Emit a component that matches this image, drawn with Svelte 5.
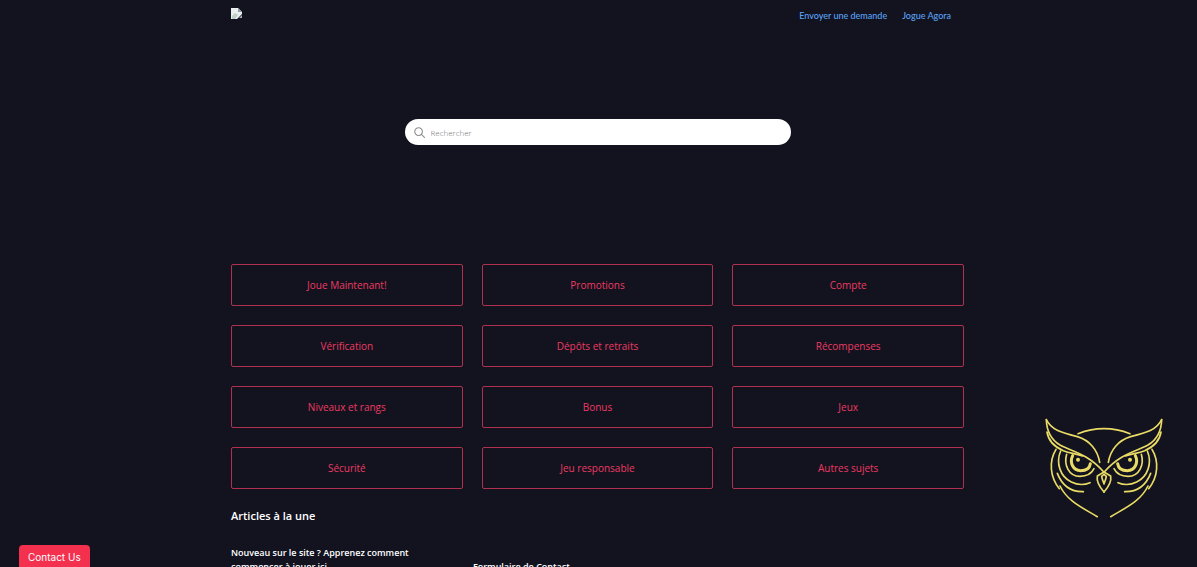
<script lang="ts">
  const links = ["Envoyer une demande", "Jogue Agora"];

  const categories = [
    "Joue Maintenant!",
    "Promotions",
    "Compte",
    "Vérification",
    "Dépôts et retraits",
    "Récompenses",
    "Niveaux et rangs",
    "Bonus",
    "Jeux",
    "Sécurité",
    "Jeu responsable",
    "Autres sujets",
  ];

  const articles = [
    "Nouveau sur le site ? Apprenez comment commencer à jouer ici",
    "Formulaire de Contact",
  ];

  let query = $state("");
</script>

<div class="page">
  <header class="header">
    <a class="logo" href="#home" aria-label="Accueil">
      <svg viewBox="0 0 11 11" aria-hidden="true">
        <path d="M0 0h7l4 4v2L6 11H0z" fill="#e9efee" />
        <path d="M1 8l3-3 3 2-3 4H1z" fill="#bccfc2" />
        <path d="M7 0v4h4z" fill="#8e9ba5" />
        <path d="M8 10l3-3v3z" fill="#a5b3ad" />
      </svg>
    </a>
    <nav class="nav">
      {#each links as link}
        <a href="#top">{link}</a>
      {/each}
    </nav>
  </header>

  <section class="hero">
    <form class="search" role="search">
      <svg viewBox="0 0 12 12" aria-hidden="true">
        <circle cx="5" cy="5" r="4.2" />
        <path d="M8 8l3.4 3.4" />
      </svg>
      <input type="search" placeholder="Rechercher" aria-label="Rechercher" bind:value={query} />
    </form>
  </section>

  <main class="container">
    <ul class="categories">
      {#each categories as category}
        <li><a href="#category">{category}</a></li>
      {/each}
    </ul>

    <h2>Articles à la une</h2>
    <ul class="articles">
      {#each articles as article}
        <li><a href="#article">{article}</a></li>
      {/each}
    </ul>
  </main>
</div>

<svg class="owl" viewBox="0 0 420 360" aria-hidden="true">
  <defs>
    <g id="owl-half">
      <!-- ear and brow -->
      <path d="M37 35C52 66 82 74 130 86C167 97 191 126 197 163" />
      <path d="M37 35C38 70 50 94 78 111C112 130 163 137 210 193" />
      <path d="M39 72C43 98 60 116 88 128C108 136 126 137 146 144" />
      <!-- eye -->
      <path d="M116 143C106 164 117 188 140 188C156 188 167 180 169 167" stroke-width="9" />
      <path d="M98 139C89 169 103 205 138 205C158 205 173 196 180 182" />
      <circle cx="132" cy="155" r="6" fill="currentColor" stroke="none" />
      <!-- feathers -->
      <path d="M80 129C65 164 78 206 112 222C130 231 152 231 168 224" />
      <path d="M66 124C44 160 48 208 76 242" />
      <path d="M70 196C85 234 113 252 148 251" />
      <path d="M78 234C100 280 147 300 190 326" />
      <!-- beak -->
      <path d="M210 192L190 204C187 220 196 236 210 252" />
      <path d="M210 199L203 205C204 212 207 220 210 227" />
    </g>
  </defs>
  <path d="M132 77Q210 47 288 77" />
  <use href="#owl-half" />
  <use href="#owl-half" transform="matrix(-1 0 0 1 420 0)" />
</svg>

<button class="contact" type="button">Contact Us</button>

<style>
  :global(body) {
    background: #12131f;
  }

  .page {
    box-sizing: border-box;
    height: 100vh;
    padding-right: 2px;
    overflow-y: auto;
    scrollbar-width: none;
    background: #12131f;
    color: #ffffff;
    font-family: "Open Sans", "Noto Sans", sans-serif;
  }

  a {
    color: inherit;
    text-decoration: none;
  }

  ul {
    margin: 0;
    padding: 0;
    list-style: none;
  }

  .header,
  .container {
    box-sizing: border-box;
    width: calc(100% - 32px);
    max-width: 733px;
    margin: 0 auto;
  }

  .header {
    display: flex;
    align-items: flex-start;
    justify-content: space-between;
    padding: 8px 13px 7px 0;
  }

  .logo svg {
    display: block;
    width: 11px;
    height: 11px;
  }

  .nav {
    display: flex;
    gap: 15px;
    color: #5ba2f5;
    font-family: Lato, "Open Sans", sans-serif;
    font-size: 9px;
    font-weight: 500;
    line-height: 15px;
  }

  .hero {
    display: flex;
    justify-content: center;
    padding: 89px 16px 119px;
  }

  .search {
    box-sizing: border-box;
    display: flex;
    align-items: center;
    gap: 6px;
    width: 100%;
    max-width: 386px;
    height: 26px;
    padding: 0 9px;
    border-radius: 13px;
    background: #ffffff;
  }

  .search svg {
    flex: none;
    width: 11px;
    height: 11px;
    fill: none;
    stroke: #8d8d8d;
    stroke-width: 1.2;
    stroke-linecap: round;
  }

  .search input {
    flex: 1;
    min-width: 0;
    padding: 0;
    border: none;
    outline: none;
    background: transparent;
    color: #333333;
    font-family: "Open Sans", "Noto Sans", sans-serif;
    font-size: 8px;
    font-weight: 300;
  }

  .search input::placeholder {
    color: #777777;
  }

  .categories {
    display: grid;
    grid-template-columns: repeat(3, 1fr);
    gap: 19px;
  }

  .categories a {
    box-sizing: border-box;
    display: flex;
    align-items: center;
    justify-content: center;
    height: 42px;
    border: 1px solid #b0314f;
    border-radius: 2px;
    color: #ee3a62;
    font-size: 10px;
    font-weight: 500;
  }

  .categories a:hover {
    background: #e5345b;
    color: #ffffff;
  }

  h2 {
    margin: 19px 0 22px;
    font-size: 11px;
    font-weight: 600;
    line-height: 16px;
  }

  .articles {
    display: flex;
    align-items: flex-end;
    padding-bottom: 32px;
    font-size: 9px;
    font-weight: 600;
    line-height: 14px;
  }

  .articles li {
    box-sizing: border-box;
    width: 33%;
    padding-right: 60px;
  }

  .owl {
    position: fixed;
    right: 23px;
    bottom: 39px;
    width: 140px;
    height: 120px;
    color: #eadb66;
    fill: none;
    stroke: currentColor;
    stroke-width: 5;
    stroke-linecap: round;
    stroke-linejoin: round;
  }

  .contact {
    position: fixed;
    bottom: 0;
    left: 19px;
    padding: 5px 9px 3px;
    border: none;
    border-radius: 4px 4px 0 0;
    background: #f4304f;
    color: #ffffff;
    font-family: Inter, "Liberation Sans", sans-serif;
    font-size: 10px;
    line-height: 14px;
    cursor: pointer;
  }
</style>
